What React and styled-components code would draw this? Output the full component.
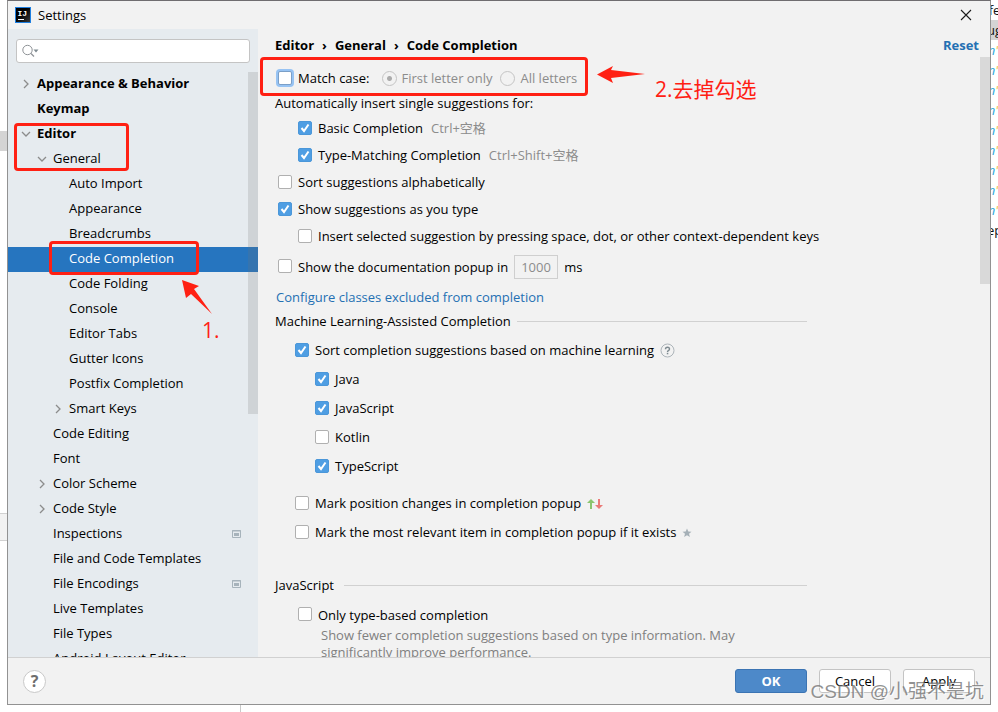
import React, { useState } from "react";
import styled, { createGlobalStyle, css } from "styled-components";

const GlobalStyle = createGlobalStyle`
  * {
    box-sizing: border-box;
  }

  body {
    margin: 0;
    background-color: #ffffff;
    color: #000000;
    font-family: "Open Sans", "Noto Sans CJK SC", sans-serif;
    font-size: 13px;
    line-height: 17px;
  }

  button,
  input {
    font: inherit;
    color: inherit;
  }
`;

/* ---------- backdrop ---------- */

const Desktop = styled.div`
  position: relative;
  display: flex;
  flex-direction: column;
  height: 100vh;
  overflow: hidden;
`;

const DesktopRow = styled.div`
  display: flex;
  flex: 1;
  min-height: 0;
`;

const LeftEdge = styled.div`
  display: flex;
  flex-direction: column;
  flex: none;
  width: 7px;
  padding-top: 131px;
`;

const EdgeTab = styled.div`
  height: 20px;
  background-color: #d4d4d4;
`;

const EdgeBand = styled.div`
  height: 28px;
  margin-top: 362px;
  background-color: #f2f2f2;
  border-top: 1px solid #d1d1d1;
  border-bottom: 1px solid #d1d1d1;
`;

const RightEdge = styled.div`
  flex: none;
  width: 7px;
  overflow: hidden;
`;

const CodeLine = styled.div`
  display: flex;
  justify-content: center;
  height: 20px;
  line-height: 20px;
  white-space: pre;
  background-color: ${(props) => (props.$active ? "#d4d4d4" : "#ffffff")};
  color: ${(props) => (props.$token ? "#2aa7dc" : "#111111")};
  font-style: ${(props) => (props.$token ? "italic" : "normal")};

  b {
    color: #f5cf7a;
  }
`;

const BottomEdge = styled.div`
  flex: none;
  height: 7px;
  width: 241px;
  border-right: 1px solid #c9c9c9;
`;

/* ---------- dialog ---------- */

const Dialog = styled.div`
  display: flex;
  flex-direction: column;
  flex: 1;
  min-width: 0;
  background-color: #f2f2f2;
  border: 1px solid #929292;
  border-top-color: #6f6d70;
`;

const TitleBar = styled.header`
  display: flex;
  align-items: center;
  flex: none;
  gap: 7px;
  height: 28px;
  padding: 0 18px 0 7px;
`;

const Title = styled.h1`
  flex: 1;
  margin: 0;
  font-size: 13px;
  font-weight: 400;
`;

const CloseButton = styled.button`
  display: flex;
  padding: 0;
  border: none;
  background: none;
`;

const DialogBody = styled.div`
  display: flex;
  flex: 1;
  min-height: 0;
`;

const Sidebar = styled.aside`
  display: flex;
  flex-direction: column;
  flex: none;
  width: 250px;
  background-color: #e6ebef;
`;

const SearchBox = styled.label`
  display: flex;
  align-items: center;
  flex: none;
  gap: 4px;
  height: 24px;
  margin: 10px 8px 9px;
  padding: 0 5px;
  background-color: #ffffff;
  border: 1px solid #c4c4c4;
  border-radius: 3px;

  input {
    flex: 1;
    min-width: 0;
    padding: 0;
    border: none;
    outline: none;
    background: none;
  }
`;

const TreePane = styled.nav`
  position: relative;
  flex: 1;
  min-height: 0;
  overflow: hidden;
`;

const Tree = styled.ul`
  margin: 0;
  padding: 0;
  list-style: none;
`;

const TreeRow = styled.button`
  display: flex;
  align-items: center;
  gap: 3px;
  width: 100%;
  height: 25px;
  padding: 0 17px 2px ${(props) => 10 + props.$level * 16}px;
  border: none;
  background-color: ${(props) => (props.$selected ? "#2675bf" : "transparent")};
  color: ${(props) => (props.$selected ? "#ffffff" : "#000000")};
  font-weight: ${(props) => (props.$bold ? 700 : 400)};
  text-align: left;
  white-space: nowrap;
`;

const TreeIcon = styled.span`
  display: flex;
  justify-content: center;
  flex: none;
  width: 16px;
`;

const TreeLabel = styled.span`
  flex: 1;
`;

const ScrollThumb = styled.div`
  position: absolute;
  top: 0;
  right: 0;
  width: 10px;
  height: ${(props) => props.$size};
  background-color: ${(props) =>
    props.$dark ? "rgba(115, 115, 115, 0.2)" : "#d9d9d9"};
`;

const Main = styled.main`
  display: flex;
  flex-direction: column;
  flex: 1;
  min-width: 0;
`;

const MainHeader = styled.div`
  display: flex;
  align-items: center;
  justify-content: space-between;
  flex: none;
  height: 28px;
  padding: 4px 11px 0 17px;
  font-weight: 700;
`;

const Breadcrumbs = styled.div`
  display: flex;
  align-items: center;
  gap: 8px;
`;

const Link = styled.a`
  color: #2470b3;
  text-decoration: none;
`;

const Content = styled.div`
  position: relative;
  flex: 1;
  min-height: 0;
  overflow: hidden;
  padding: 9px 17px 0;
`;

const Form = styled.form`
  display: flex;
  flex-direction: column;
  max-width: 532px;
`;

const Row = styled.div`
  display: flex;
  align-items: center;
  flex: none;
  gap: ${(props) => props.$gap || 8}px;
  height: ${(props) => props.$height || 27}px;
  padding-left: ${(props) => props.$indent || 0}px;
  white-space: nowrap;
`;

const Group = styled.section`
  display: flex;
  flex-direction: column;
  margin-top: ${(props) => props.$space || 0}px;
`;

const SectionTitle = styled.h2`
  display: flex;
  align-items: center;
  gap: ${(props) => props.$gap || 6}px;
  height: 22px;
  margin: 0;
  font-size: 13px;
  font-weight: 400;
  white-space: nowrap;

  &::after {
    content: "";
    flex: 1;
    height: 1px;
    background-color: #d1d1d1;
  }
`;

const Option = styled.label`
  display: flex;
  align-items: center;
  gap: ${(props) => (props.$muted ? 5 : 6)}px;
  color: ${(props) => (props.$muted ? "#8c8c8c" : "inherit")};
`;

const Tick = styled.span`
  display: grid;
  width: 14px;
  height: 16px;

  input,
  svg {
    grid-area: 1 / 1;
  }

  svg {
    pointer-events: none;
  }
`;

const CheckInput = styled.input`
  appearance: none;
  width: 14px;
  height: 14px;
  margin: 0;
  background-color: #ffffff;
  border: 1px solid #b0b0b0;
  border-radius: 2px;

  &:checked {
    background-color: #4f9ee3;
    border-color: #4b97d9;
  }

  ${(props) =>
    props.$ring &&
    css`
      border-color: #7b9fc7;
      box-shadow: 0 0 0 2px #97c3f3;
    `}
`;

const RadioInput = styled.input`
  appearance: none;
  width: 15px;
  height: 15px;
  margin: 0;
  border: 1px solid #c4c4c4;
  border-radius: 50%;

  &:checked {
    background: radial-gradient(circle, #ababab 2px, transparent 3px);
  }
`;

const Shortcut = styled.span`
  color: #8c8c8c;
`;

const DelayInput = styled.input`
  width: 44px;
  height: 24px;
  padding: 0 6px;
  background-color: #f2f2f2;
  border: 1px solid #cfcfcf;
  color: #8c8c8c;
`;

const Hint = styled.p`
  max-width: 470px;
  margin: 0;
  padding-left: 46px;
  color: #808080;
`;

const Footer = styled.footer`
  display: flex;
  align-items: center;
  flex: none;
  gap: 12px;
  height: 47px;
  padding: 0 15px;
  border-top: 1px solid #d1d1d1;
`;

const HelpButton = styled.button`
  width: 23px;
  height: 23px;
  margin-right: auto;
  padding: 0;
  background-color: #ffffff;
  border: 1px solid #c9c9c9;
  border-radius: 50%;
  color: #6e6e6e;
  font-size: 16px;
  font-weight: 700;
  line-height: 20px;
`;

const Button = styled.button`
  width: 72px;
  height: 24px;
  padding: 0;
  border-radius: 3px;
  border: 1px solid ${(props) => (props.$primary ? "#3b74b3" : "#c4c4c4")};
  background-color: ${(props) => (props.$primary ? "#4d89c9" : "#ffffff")};
  color: ${(props) => (props.$primary ? "#ffffff" : "#000000")};
  font-weight: ${(props) => (props.$primary ? 700 : 400)};
`;

/* ---------- marks drawn over the dialog ---------- */

const Frame = styled.div`
  position: absolute;
  top: ${(props) => props.$top}px;
  left: ${(props) => props.$left}px;
  width: ${(props) => props.$width}px;
  height: ${(props) => props.$height}px;
  border: 3px solid #ff2013;
  border-radius: 4px;
  pointer-events: none;
`;

const Arrow = styled.svg`
  position: absolute;
  top: ${(props) => props.$top}px;
  left: ${(props) => props.$left}px;
  fill: #ff2013;
  pointer-events: none;
`;

const Note = styled.div`
  position: absolute;
  top: ${(props) => props.$top}px;
  left: ${(props) => props.$left}px;
  color: #ff2013;
  font-size: 21px;
  line-height: 28px;
  white-space: nowrap;
`;

const Watermark = styled.div`
  position: absolute;
  right: 14px;
  bottom: 6px;
  color: rgba(110, 110, 110, 0.75);
  font-family: "Liberation Sans", "Noto Sans CJK SC", sans-serif;
  font-size: 19px;
  line-height: 28px;
  text-shadow: 1px 1px 0 rgba(255, 255, 255, 0.8);
  white-space: nowrap;
  pointer-events: none;
`;

/* ---------- icons ---------- */

const IdeaLogo = () => (
  <svg width="16" height="16" viewBox="0 0 16 16">
    <defs>
      <linearGradient id="logo-fill" x1="0" y1="0" x2="1" y2="1">
        <stop offset="0.4" stopColor="#000000" />
        <stop offset="1" stopColor="#3a3a3a" />
      </linearGradient>
    </defs>
    <rect width="16" height="16" fill="#1f7fe0" />
    <rect x="1" y="1" width="14" height="14" fill="url(#logo-fill)" />
    <text
      x="2.5"
      y="9"
      fill="#ffffff"
      fontFamily="Liberation Mono, monospace"
      fontSize="8"
      fontWeight="700"
    >
      IJ
    </text>
    <rect x="3" y="12" width="6" height="1" fill="#ffffff" />
  </svg>
);

const CloseIcon = () => (
  <svg width="12" height="12" viewBox="0 0 12 12">
    <path d="M1 1l10 10M11 1L1 11" stroke="#1a1a1a" strokeWidth="1.1" />
  </svg>
);

const SearchIcon = () => (
  <svg width="17" height="14" viewBox="0 0 17 14">
    <circle cx="5.5" cy="6" r="4.7" fill="none" stroke="#8e9296" />
    <path d="M9 9.5l3 3" stroke="#8e9296" strokeWidth="1.3" />
    <path d="M11.5 5.5h5l-2.5 3z" fill="#7f8b91" />
  </svg>
);

const Chevron = ({ open }) => (
  <svg width="10" height="10" viewBox="0 0 10 10">
    <path
      d={open ? "M1 3l4 4 4-4" : "M3 1l4 4-4 4"}
      fill="none"
      stroke="#8c8c8c"
      strokeWidth="1.3"
    />
  </svg>
);

const ProjectIcon = () => (
  <svg width="9" height="8" viewBox="0 0 9 8">
    <path d="M0.5 0.5h8v7h-8zM0 1h9" fill="none" stroke="#a7b3bb" />
    <rect x="2" y="3" width="5" height="3" fill="#a7b3bb" />
  </svg>
);

const CheckMark = () => (
  <svg width="14" height="14" viewBox="0 0 14 14">
    <path
      d="M3.5 7l2.5 3 4.5-6.5"
      fill="none"
      stroke="#ffffff"
      strokeWidth="2"
    />
  </svg>
);

const HelpIcon = () => (
  <svg width="15" height="15" viewBox="0 0 15 15">
    <circle cx="7.5" cy="7.5" r="6.5" fill="none" stroke="#adb5ba" />
    <path
      d="M5.5 6.2q0-2 2-2t2 1.8q0 1-1.1 1.6-.9.5-.9 1.4"
      fill="none"
      stroke="#7f8b91"
      strokeWidth="1.4"
    />
    <rect x="6.8" y="9.8" width="1.5" height="1.5" fill="#7f8b91" />
  </svg>
);

const UpDownIcon = () => (
  <svg width="16" height="12" viewBox="0 0 16 12">
    <path d="M4 1L0 5h3v6h2V5h3z" fill="#8bc56f" />
    <path d="M12 11l4-4h-3V1h-2v6H8z" fill="#ea7b78" />
  </svg>
);

const StarIcon = () => (
  <svg width="10" height="10" viewBox="0 0 10 10">
    <path
      d="M5 .5l1.3 3 3.2.2-2.5 2 .9 3.3L5 7.2 2.1 9 3 5.7.5 3.7l3.2-.2z"
      fill="#a5b0b7"
    />
  </svg>
);

const treeItems = [
  { label: "Appearance & Behavior", level: 0, bold: true, icon: "closed" },
  { label: "Keymap", level: 0, bold: true },
  { label: "Editor", level: 0, bold: true, icon: "open" },
  { label: "General", level: 1, icon: "open" },
  { label: "Auto Import", level: 2 },
  { label: "Appearance", level: 2 },
  { label: "Breadcrumbs", level: 2 },
  { label: "Code Completion", level: 2 },
  { label: "Code Folding", level: 2 },
  { label: "Console", level: 2 },
  { label: "Editor Tabs", level: 2 },
  { label: "Gutter Icons", level: 2 },
  { label: "Postfix Completion", level: 2 },
  { label: "Smart Keys", level: 2, icon: "closed" },
  { label: "Code Editing", level: 1 },
  { label: "Font", level: 1 },
  { label: "Color Scheme", level: 1, icon: "closed" },
  { label: "Code Style", level: 1, icon: "closed" },
  { label: "Inspections", level: 1, project: true },
  { label: "File and Code Templates", level: 1 },
  { label: "File Encodings", level: 1, project: true },
  { label: "Live Templates", level: 1 },
  { label: "File Types", level: 1 },
  { label: "Android Layout Editor", level: 1 },
];

const languages = [
  { name: "Java", on: true },
  { name: "JavaScript", on: true },
  { name: "Kotlin", on: false },
  { name: "TypeScript", on: true },
];

const Check = ({ label, on = false, ring }) => {
  const [checked, setChecked] = useState(on);
  return (
    <Option>
      <Tick>
        <CheckInput
          type="checkbox"
          checked={checked}
          $ring={ring}
          onChange={() => setChecked(!checked)}
        />
        {checked && <CheckMark />}
      </Tick>
      {label}
    </Option>
  );
};

const SettingsTree = () => {
  const [selected, setSelected] = useState("Code Completion");
  return (
    <TreePane>
      <Tree>
        {treeItems.map((item) => (
          <li key={item.level + item.label}>
            <TreeRow
              type="button"
              $level={item.level}
              $bold={item.bold}
              $selected={selected === item.label}
              onClick={() => setSelected(item.label)}
            >
              <TreeIcon>
                {item.icon && <Chevron open={item.icon === "open"} />}
              </TreeIcon>
              <TreeLabel>{item.label}</TreeLabel>
              {item.project && <ProjectIcon />}
            </TreeRow>
          </li>
        ))}
      </Tree>
      <ScrollThumb $size="342px" $dark />
    </TreePane>
  );
};

const CompletionForm = () => (
  <Form>
    <Row $height={25} $indent={3} $gap={12}>
      <Check label="Match case:" ring />
      <Row as="span" $height={25}>
        <Option $muted>
          <RadioInput type="radio" name="case" defaultChecked disabled />
          First letter only
        </Option>
        <Option $muted>
          <RadioInput type="radio" name="case" disabled />
          All letters
        </Option>
      </Row>
    </Row>
    <Row $height={24}>Automatically insert single suggestions for:</Row>
    <Row $indent={23}>
      <Check label="Basic Completion" on />
      <Shortcut>Ctrl+空格</Shortcut>
    </Row>
    <Row $indent={23}>
      <Check label="Type-Matching Completion" on />
      <Shortcut>Ctrl+Shift+空格</Shortcut>
    </Row>
    <Row $indent={3}>
      <Check label="Sort suggestions alphabetically" />
    </Row>
    <Row $indent={3}>
      <Check label="Show suggestions as you type" on />
    </Row>
    <Row $indent={23}>
      <Check label="Insert selected suggestion by pressing space, dot, or other context-dependent keys" />
    </Row>
    <Row $height={34} $indent={3} $gap={6}>
      <Check label="Show the documentation popup in" />
      <DelayInput aria-label="Delay" defaultValue="1000" disabled />
      ms
    </Row>
    <Row $height={26} $indent={1}>
      <Link href="#excluded">Configure classes excluded from completion</Link>
    </Row>

    <SectionTitle>Machine Learning-Assisted Completion</SectionTitle>
    <Group $space={4}>
      <Row $height={29} $indent={20} $gap={6}>
        <Check
          label="Sort completion suggestions based on machine learning"
          on
        />
        <HelpIcon />
      </Row>
      {languages.map((language) => (
        <Row key={language.name} $height={29} $indent={40}>
          <Check label={language.name} on={language.on} />
        </Row>
      ))}
    </Group>
    <Group $space={8}>
      <Row $height={29} $indent={20} $gap={6}>
        <Check label="Mark position changes in completion popup" />
        <UpDownIcon />
      </Row>
      <Row $height={29} $indent={20} $gap={6}>
        <Check label="Mark the most relevant item in completion popup if it exists" />
        <StarIcon />
      </Row>
    </Group>

    <Group $space={27}>
      <SectionTitle $gap={10}>JavaScript</SectionTitle>
      <Group $space={7}>
        <Row $height={24} $indent={23}>
          <Check label="Only type-based completion" />
        </Row>
        <Hint>
          Show fewer completion suggestions based on type information. May
          significantly improve performance.
        </Hint>
      </Group>
    </Group>
  </Form>
);

const SettingsDialog = () => (
  <Dialog role="dialog" aria-label="Settings">
    <TitleBar>
      <IdeaLogo />
      <Title>Settings</Title>
      <CloseButton type="button" aria-label="Close">
        <CloseIcon />
      </CloseButton>
    </TitleBar>
    <DialogBody>
      <Sidebar>
        <SearchBox>
          <SearchIcon />
          <input type="text" aria-label="Search settings" />
        </SearchBox>
        <SettingsTree />
      </Sidebar>
      <Main>
        <MainHeader>
          <Breadcrumbs>
            <span>Editor</span>
            <span>›</span>
            <span>General</span>
            <span>›</span>
            <span>Code Completion</span>
          </Breadcrumbs>
          <Link href="#reset">Reset</Link>
        </MainHeader>
        <Content>
          <CompletionForm />
          <ScrollThumb $size="227px" />
        </Content>
      </Main>
    </DialogBody>
    <Footer>
      <HelpButton type="button" aria-label="Help">
        ?
      </HelpButton>
      <Button type="button" $primary>
        OK
      </Button>
      <Button type="button">Cancel</Button>
      <Button type="button">Apply</Button>
    </Footer>
  </Dialog>
);

const App = () => (
  <>
    <GlobalStyle />
    <Desktop>
      <DesktopRow>
        <LeftEdge>
          <EdgeTab />
          <EdgeBand />
        </LeftEdge>
        <SettingsDialog />
        <RightEdge>
          <CodeLine>fe</CodeLine>
          <CodeLine $active>ug</CodeLine>
          {[0, 1, 2, 3, 4, 5, 6, 7, 8].map((line) => (
            <CodeLine key={line} $token>
              n<b>"</b>
            </CodeLine>
          ))}
          <CodeLine>ep</CodeLine>
        </RightEdge>
      </DesktopRow>
      <BottomEdge />

      <Frame $top={123} $left={14} $width={115} $height={48} />
      <Frame $top={241} $left={49} $width={150} $height={34} />
      <Frame $top={57} $left={260} $width={328} $height={39} />
      <Arrow $top={280} $left={182} width="31" height="36" viewBox="0 0 31 36">
        <path d="M0 0l17 6-5 3 18 25L9 14l-5 4z" />
      </Arrow>
      <Arrow $top={65} $left={597} width="49" height="20" viewBox="0 0 49 20">
        <path d="M0 9.5L16 1l-2 4 34 4-34 4 2 5z" />
      </Arrow>
      <Note $top={316} $left={202}>
        1.
      </Note>
      <Note $top={75} $left={655}>
        2.去掉勾选
      </Note>
      <Watermark>CSDN @小强不是坑</Watermark>
    </Desktop>
  </>
);

export default App;
